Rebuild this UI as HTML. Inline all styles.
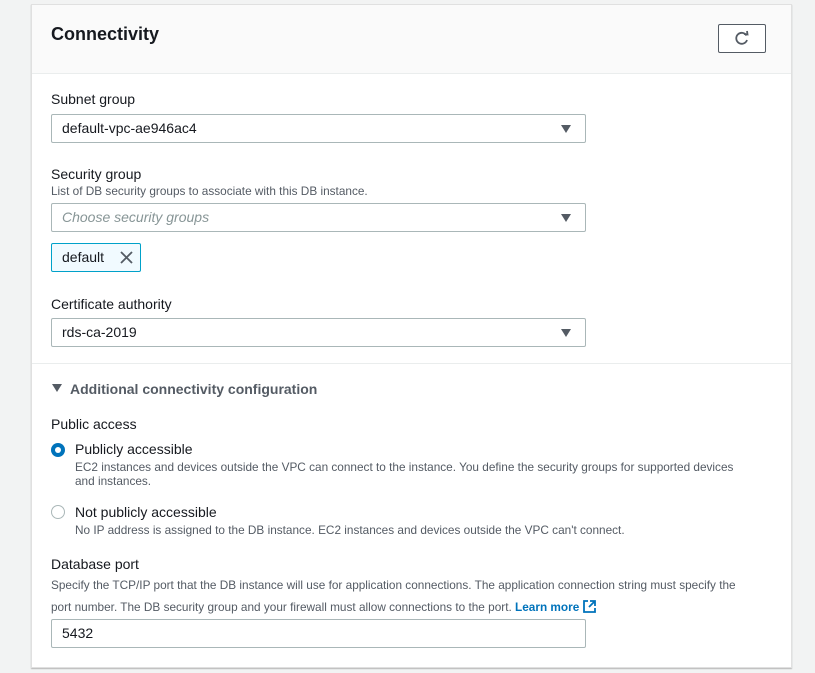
<!DOCTYPE html>
<html><head><style>
body{margin:0;width:815px;height:673px;background:#f2f3f3;font-family:"Liberation Sans",sans-serif;color:#16191f;position:relative;overflow:hidden}
.card{position:absolute;left:31px;top:4px;width:759px;height:662px;background:#fff;border:1px solid #e0e0e0;box-shadow:0 1px 1px rgba(0,0,0,.25)}
.hdr{position:absolute;left:0;top:0;width:759px;height:68px;background:#fafafa;border-bottom:1px solid #eaeded}
.a{position:absolute;white-space:nowrap}
.lbl{font-size:14px;color:#16191f}
.desc{font-size:11.8px;color:#545b64}
.inp{position:absolute;left:19px;width:535px;height:29px;border:1px solid #aab7b8;border-radius:2px;background:#fff;font-size:14px;line-height:27px;padding-left:10px;box-sizing:border-box}
.arr{position:absolute;right:14px;top:10px;width:0;height:0;border-left:5px solid transparent;border-right:5px solid transparent;border-top:8px solid #545b64}
</style></head><body>
<div class="card">
 <div class="hdr">
  <div class="a" style="left:19px;top:19px;font-size:18px;font-weight:bold">Connectivity</div>
  <div class="a" style="left:686px;top:19px;width:46px;height:27px;border:1px solid #545b64;border-radius:2px;background:#fff">
   <svg width="46" height="27" viewBox="0 0 46 27"><path d="M27.5 10.5 A5.5 5.5 0 1 0 28 15" fill="none" stroke="#545b64" stroke-width="1.8"/><path d="M25 9 L28.5 9.5 L28 6" fill="none" stroke="#545b64" stroke-width="1.8"/></svg>
  </div>
 </div>
 <div class="a lbl" style="left:19px;top:86px">Subnet group</div>
 <div class="inp" style="top:109px">default-vpc-ae946ac4<div class="arr"></div></div>
 <div class="a lbl" style="left:19px;top:161px">Security group</div>
 <div class="a desc" style="left:19px;top:179px">List of DB security groups to associate with this DB instance.</div>
 <div class="inp" style="top:198px;color:#879596;font-style:italic">Choose security groups<div class="arr"></div></div>
 <div class="a" style="left:19px;top:238px;width:90px;height:29px;border:1px solid #00a1c9;background:#f1faff;border-radius:2px;font-size:14px;line-height:27px;padding-left:10px;box-sizing:border-box">default
  <svg style="position:absolute;left:68px;top:7px" width="13" height="13"><path d="M1 1L12 12M12 1L1 12" stroke="#545b64" stroke-width="1.8"/></svg></div>
 <div class="a lbl" style="left:19px;top:291px">Certificate authority</div>
 <div class="inp" style="top:313px">rds-ca-2019<div class="arr"></div></div>
 <div class="a" style="left:0;top:358px;width:759px;border-top:1px solid #eaeded"></div>
 <div class="a" style="left:20px;top:379px;width:0;height:0;border-left:5px solid transparent;border-right:5px solid transparent;border-top:8px solid #545b64"></div>
 <div class="a" style="left:38px;top:376px;font-size:14px;font-weight:bold;color:#545b64">Additional connectivity configuration</div>
 <div class="a lbl" style="left:19px;top:411px">Public access</div>
 <div class="a" style="left:19px;top:438px;width:14px;height:14px;border-radius:50%;background:#0073bb"><div style="position:absolute;left:4px;top:4px;width:6px;height:6px;border-radius:50%;background:#fff"></div></div>
 <div class="a lbl" style="left:43px;top:436px">Publicly accessible</div>
 <div class="a desc" style="left:43px;top:455px;line-height:14px">EC2 instances and devices outside the VPC can connect to the instance. You define the security groups for supported devices<br>and instances.</div>
 <div class="a" style="left:19px;top:500px;width:12px;height:12px;border-radius:50%;border:1px solid #aab7b8"></div>
 <div class="a lbl" style="left:43px;top:499px">Not publicly accessible</div>
 <div class="a desc" style="left:43px;top:518px">No IP address is assigned to the DB instance. EC2 instances and devices outside the VPC can't connect.</div>
 <div class="a lbl" style="left:19px;top:551px">Database port</div>
 <div class="a desc" style="left:19px;top:569px;line-height:22px">Specify the TCP/IP port that the DB instance will use for application connections. The application connection string must specify the<br>port number. The DB security group and your firewall must allow connections to the port. <b style="color:#0073bb">Learn more</b> <svg width="13" height="13" style="vertical-align:-2px"><path d="M5 1H1V12H12V8M7 1H12V6M12 1L6 7" fill="none" stroke="#0073bb" stroke-width="1.8"/></svg></div>
 <div class="inp" style="top:614px">5432</div>
</div>
</body></html>
